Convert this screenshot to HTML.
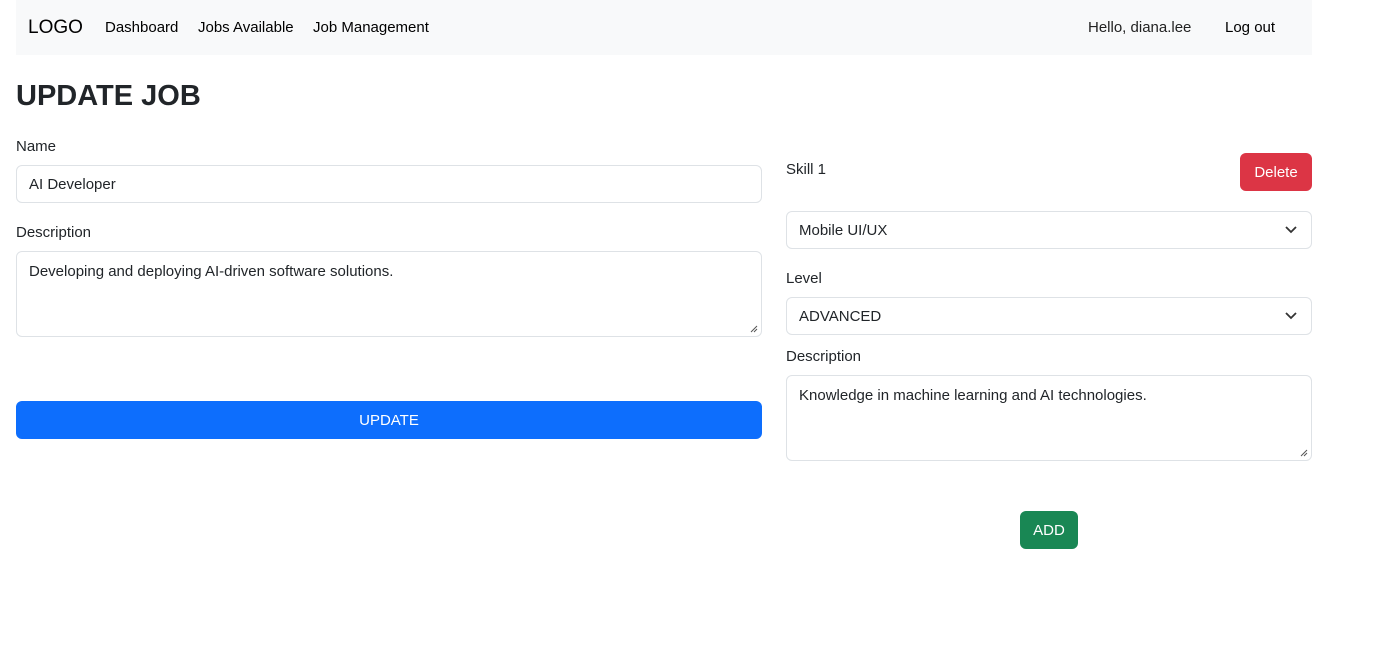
<!DOCTYPE html>
<html><head><meta charset="utf-8"><style>
*{box-sizing:border-box;margin:0;padding:0}
body{width:1380px;height:667px;background:#fff;font-family:"Liberation Sans",sans-serif;color:#212529;font-size:15px;position:relative;overflow:hidden}
.a{position:absolute}
.nav{left:16px;top:0;width:1296px;height:55px;background:#f8f9fa}
.inp{border:1px solid #dee2e6;border-radius:6px;background:#fff;padding:0 12px;display:flex;align-items:center;font-size:15px;padding-top:1px}
.ta{align-items:flex-start;padding-top:11px}
.lbl{font-size:15px}
.btn{border-radius:6px;color:#fff;display:flex;align-items:center;justify-content:center;font-size:15px;padding-top:1px}
.chev{position:absolute;right:14px;top:50%;margin-top:-5px}
.grip{position:absolute;right:3px;bottom:3px}
</style></head><body>
<div class="a nav"></div>
<div class="a" style="left:28px;top:17px;font-size:19px;color:#000">LOGO</div>
<div class="a" style="left:105px;top:19px;color:#000">Dashboard</div>
<div class="a" style="left:198px;top:19px;color:#000">Jobs Available</div>
<div class="a" style="left:313px;top:19px;color:#000">Job Management</div>
<div class="a" style="left:1088px;top:19px;color:#222">Hello, diana.lee</div>
<div class="a" style="left:1225px;top:19px;color:#000">Log out</div>
<div class="a" style="left:16px;top:80px;font-size:29px;font-weight:bold">UPDATE JOB</div>

<div class="a lbl" style="left:16px;top:138px">Name</div>
<div class="a inp" style="left:16px;top:165px;width:746px;height:38px">AI Developer</div>
<div class="a lbl" style="left:16px;top:224px">Description</div>
<div class="a inp ta" style="left:16px;top:251px;width:746px;height:86px">Developing and deploying AI-driven software solutions.<svg class="grip" width="8" height="8"><path d="M1 7L7 1M4 7L7 4" stroke="#555"/></svg></div>
<div class="a btn" style="left:16px;top:401px;width:746px;height:38px;background:#0d6efd">UPDATE</div>

<div class="a lbl" style="left:786px;top:161px">Skill 1</div>
<div class="a btn" style="left:1240px;top:153px;width:72px;height:38px;background:#dc3545">Delete</div>
<div class="a inp" style="left:786px;top:211px;width:526px;height:38px">Mobile UI/UX<svg class="chev" width="12" height="10"><path d="M1 2l5 5 5-5" fill="none" stroke="#333" stroke-width="1.8"/></svg></div>
<div class="a lbl" style="left:786px;top:270px">Level</div>
<div class="a inp" style="left:786px;top:297px;width:526px;height:38px">ADVANCED<svg class="chev" width="12" height="10"><path d="M1 2l5 5 5-5" fill="none" stroke="#333" stroke-width="1.8"/></svg></div>
<div class="a lbl" style="left:786px;top:348px">Description</div>
<div class="a inp ta" style="left:786px;top:375px;width:526px;height:86px">Knowledge in machine learning and AI technologies.<svg class="grip" width="8" height="8"><path d="M1 7L7 1M4 7L7 4" stroke="#555"/></svg></div>
<div class="a btn" style="left:1020px;top:511px;width:58px;height:38px;background:#198754">ADD</div>
</body></html>
